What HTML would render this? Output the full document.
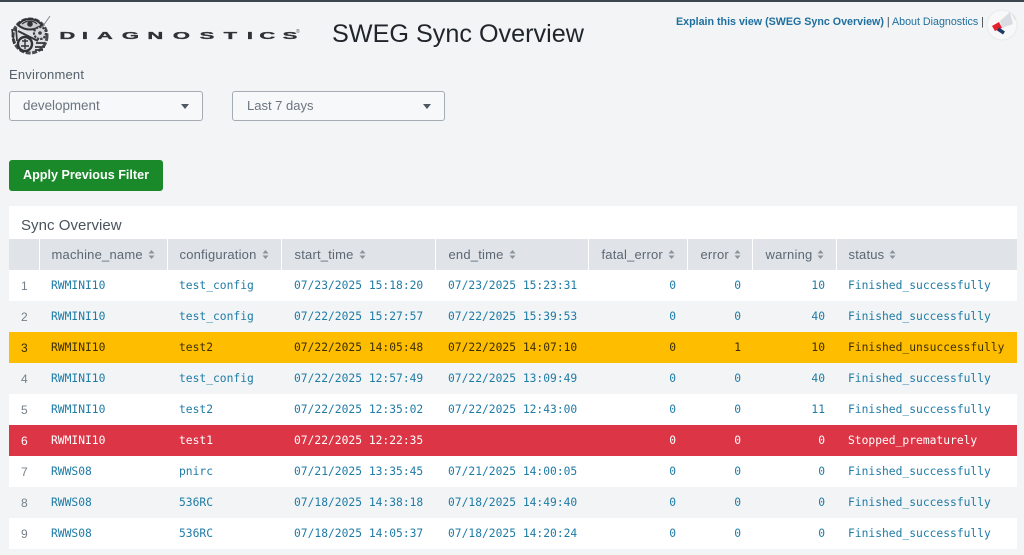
<!DOCTYPE html>
<html><head><meta charset="utf-8"><title>SWEG Sync Overview</title>
<style>
html,body{margin:0;padding:0;width:1024px;height:555px;overflow:hidden;background:#f2f4f5;font-family:"Liberation Sans",sans-serif;color:#3c444d}
.a{position:absolute;white-space:nowrap}
#top{left:0;top:0;width:1024px;height:2px;background:#3c444d}
.dd{box-sizing:border-box;height:30px;border:1px solid #a4abb3;border-radius:3px;background:#f7f8fa;color:#6b7580;font-size:13px;line-height:28px;padding-left:13px}
.dd i{position:absolute;right:13px;top:12px;width:0;height:0;border:4px solid transparent;border-top:5px solid #4f5862;border-bottom:0}
#btn{left:9px;top:160px;width:154px;height:31px;background:#1a8929;border-radius:3px;color:#fff;font-weight:bold;font-size:12.6px;line-height:31px;text-align:center}
#panel{left:9px;top:206px;width:1008px;height:343px;background:#fff}
table{position:absolute;left:9px;top:239px;width:1008px;border-collapse:collapse;table-layout:fixed}
th{height:31px;padding:0 0 0 12px;box-sizing:border-box;background:#e0e4e8;border-right:1px solid #fff;font-weight:normal;font-size:13px;letter-spacing:.2px;text-align:left;color:#5c6773;white-space:nowrap}
th:last-child{border-right:0}
th svg{margin-left:5px;vertical-align:-1px}
td{height:31px;padding:0 0 0 12px;box-sizing:border-box;font-family:"DejaVu Sans Mono",monospace;font-size:11.3px;color:#1e7ba6;white-space:nowrap;overflow:visible}
td:first-child{color:#75808a;padding-left:12px;font-family:"Liberation Sans",sans-serif;font-size:12px}
td.n{text-align:right;padding:0 11px 0 0}
td.d{padding-left:13px}
tr.o td{background:#f2f4f5}
tr.w td{background:#ffffff}
tr.y td{background:#ffbd00;color:#3b2e00}
tr.r td{background:#dc3545;color:#fff}
tr.r td:first-child{color:#fff}
tr.y td:first-child{color:#3b2e00}
</style></head><body>
<div class="a" id="top"></div>

<svg class="a" style="left:8px;top:14px" width="46" height="42" viewBox="0 0 46 42">
<circle cx="22" cy="22" r="17" fill="#dfe0e2" stroke="#4a4c4f" stroke-width="3" stroke-dasharray="5 1.5"/>
<path d="M10 11C16 3 27 3 34 11C27 17 17 17 10 11Z" fill="#c9cbcd" stroke="#2f3134" stroke-width="2"/>
<path d="M14 10C19 6 25 6 29 10" fill="none" stroke="#34363a" stroke-width="1.2"/>
<circle cx="22" cy="10" r="2.8" fill="#333"/>
<circle cx="32" cy="19" r="6" fill="#d8d9da" stroke="#3c3e41" stroke-width="2.2" stroke-dasharray="2.4 1"/><circle cx="32" cy="19" r="1.8" fill="#3c3e41"/>
<circle cx="17" cy="30" r="7" fill="#dcdddf" stroke="#2f3134" stroke-width="2.4"/>
<path d="M17 25V35M13 32H21M14 27H20" stroke="#2f3134" stroke-width="1.4"/>
<path d="M4 15L6 30M8 14L9 27M27 33H37M27 36H35M28 29H37" stroke="#34363a" stroke-width="1.7"/>
<path d="M10 17L30 27" stroke="#34363a" stroke-width="2"/>
<path d="M35 12L42 2" stroke="#888" stroke-width="1"/>
</svg>
<svg class="a" style="left:0;top:20px" width="310" height="26">
<text transform="scale(2.2,1)" y="19" font-family="Liberation Sans" font-weight="bold" font-size="10" fill="#2f3236" stroke="#2f3236" stroke-width=".3" text-anchor="middle" x="30.6 38.6 47.7 59.3 70.6 82.5 94.1 104.7 113.6 121.5 131.8">DIAGNOSTICS</text>
<text x="296" y="13" font-family="Liberation Sans" font-size="5" fill="#555">®</text>
</svg>

<div class="a" style="left:332px;top:19px;font-size:25.2px;line-height:30px;color:#1f252b">SWEG Sync Overview</div>

<div class="a" style="left:676px;top:16px;font-size:10.7px;line-height:13px;color:#3c444d"><b style="color:#1e6f9f">Explain this view (SWEG Sync Overview)</b> | <span style="color:#1e6f9f">About Diagnostics</span> |</div>

<svg class="a" style="left:985px;top:8px" width="34" height="34" viewBox="0 0 34 34">
<circle cx="17" cy="17" r="15" fill="#f8f8f9" stroke="#e8eaec"/>
<path d="M15 13L25 4L28 16L17 20Z" fill="#d9dce0"/>
<path d="M27 6C29 8 30 10 30 12" stroke="#dfe2e5" stroke-width="1.5" fill="none"/>
<path d="M7 18L14 14L17 20L10 23Z" fill="#e8202c"/>
<path d="M13 21L19 25" stroke="#1f3b63" stroke-width="3.5"/>
</svg>

<div class="a" style="left:9px;top:67px;font-size:13px;letter-spacing:.2px;line-height:16px;color:#56606b">Environment</div>
<div class="a dd" style="left:9px;top:91px;width:194px;font-size:13.4px">development<i></i></div>
<div class="a dd" style="left:232px;top:91px;width:213px;padding-left:14px">Last 7 days<i></i></div>
<div class="a" id="btn">Apply Previous Filter</div>

<div class="a" id="panel"></div>
<div class="a" style="left:21px;top:217px;font-size:15px;letter-spacing:.05px;line-height:18px;color:#4a535d">Sync Overview</div>

<table>
<colgroup><col style="width:30px"><col style="width:128px"><col style="width:114px"><col style="width:154px"><col style="width:153px"><col style="width:99px"><col style="width:65px"><col style="width:84px"><col></colgroup>
<tr><th></th>
<th>machine_name<svg width="7" height="11" viewBox="0 0 7 11"><path d="M3.5 1L6.5 4.5H.5ZM3.5 10L.5 6.5H6.5Z" fill="#8a939c"/></svg></th>
<th>configuration<svg width="7" height="11" viewBox="0 0 7 11"><path d="M3.5 1L6.5 4.5H.5ZM3.5 10L.5 6.5H6.5Z" fill="#8a939c"/></svg></th>
<th style="padding-left:13px">start_time<svg width="7" height="11" viewBox="0 0 7 11"><path d="M3.5 1L6.5 4.5H.5ZM3.5 10L.5 6.5H6.5Z" fill="#8a939c"/></svg></th>
<th style="padding-left:13px">end_time<svg width="7" height="11" viewBox="0 0 7 11"><path d="M3.5 1L6.5 4.5H.5ZM3.5 10L.5 6.5H6.5Z" fill="#8a939c"/></svg></th>
<th style="padding-left:13px">fatal_error<svg width="7" height="11" viewBox="0 0 7 11"><path d="M3.5 1L6.5 4.5H.5ZM3.5 10L.5 6.5H6.5Z" fill="#8a939c"/></svg></th>
<th style="padding-left:13px">error<svg width="7" height="11" viewBox="0 0 7 11"><path d="M3.5 1L6.5 4.5H.5ZM3.5 10L.5 6.5H6.5Z" fill="#8a939c"/></svg></th>
<th style="padding-left:13px">warning<svg width="7" height="11" viewBox="0 0 7 11"><path d="M3.5 1L6.5 4.5H.5ZM3.5 10L.5 6.5H6.5Z" fill="#8a939c"/></svg></th>
<th style="padding-left:12px">status<svg width="7" height="11" viewBox="0 0 7 11"><path d="M3.5 1L6.5 4.5H.5ZM3.5 10L.5 6.5H6.5Z" fill="#8a939c"/></svg></th></tr>
<tr class="w"><td>1</td><td>RWMINI10</td><td>test_config</td><td class="d">07/23/2025 15:18:20</td><td class="d">07/23/2025 15:23:31</td><td class="n">0</td><td class="n">0</td><td class="n">10</td><td>Finished_successfully</td></tr>
<tr class="o"><td>2</td><td>RWMINI10</td><td>test_config</td><td class="d">07/22/2025 15:27:57</td><td class="d">07/22/2025 15:39:53</td><td class="n">0</td><td class="n">0</td><td class="n">40</td><td>Finished_successfully</td></tr>
<tr class="y"><td>3</td><td>RWMINI10</td><td>test2</td><td class="d">07/22/2025 14:05:48</td><td class="d">07/22/2025 14:07:10</td><td class="n">0</td><td class="n">1</td><td class="n">10</td><td>Finished_unsuccessfully</td></tr>
<tr class="o"><td>4</td><td>RWMINI10</td><td>test_config</td><td class="d">07/22/2025 12:57:49</td><td class="d">07/22/2025 13:09:49</td><td class="n">0</td><td class="n">0</td><td class="n">40</td><td>Finished_successfully</td></tr>
<tr class="w"><td>5</td><td>RWMINI10</td><td>test2</td><td class="d">07/22/2025 12:35:02</td><td class="d">07/22/2025 12:43:00</td><td class="n">0</td><td class="n">0</td><td class="n">11</td><td>Finished_successfully</td></tr>
<tr class="r"><td>6</td><td>RWMINI10</td><td>test1</td><td class="d">07/22/2025 12:22:35</td><td class="d"></td><td class="n">0</td><td class="n">0</td><td class="n">0</td><td>Stopped_prematurely</td></tr>
<tr class="w"><td>7</td><td>RWWS08</td><td>pnirc</td><td class="d">07/21/2025 13:35:45</td><td class="d">07/21/2025 14:00:05</td><td class="n">0</td><td class="n">0</td><td class="n">0</td><td>Finished_successfully</td></tr>
<tr class="o"><td>8</td><td>RWWS08</td><td>536RC</td><td class="d">07/18/2025 14:38:18</td><td class="d">07/18/2025 14:49:40</td><td class="n">0</td><td class="n">0</td><td class="n">0</td><td>Finished_successfully</td></tr>
<tr class="w"><td>9</td><td>RWWS08</td><td>536RC</td><td class="d">07/18/2025 14:05:37</td><td class="d">07/18/2025 14:20:24</td><td class="n">0</td><td class="n">0</td><td class="n">0</td><td>Finished_successfully</td></tr>
</table>
</body></html>
